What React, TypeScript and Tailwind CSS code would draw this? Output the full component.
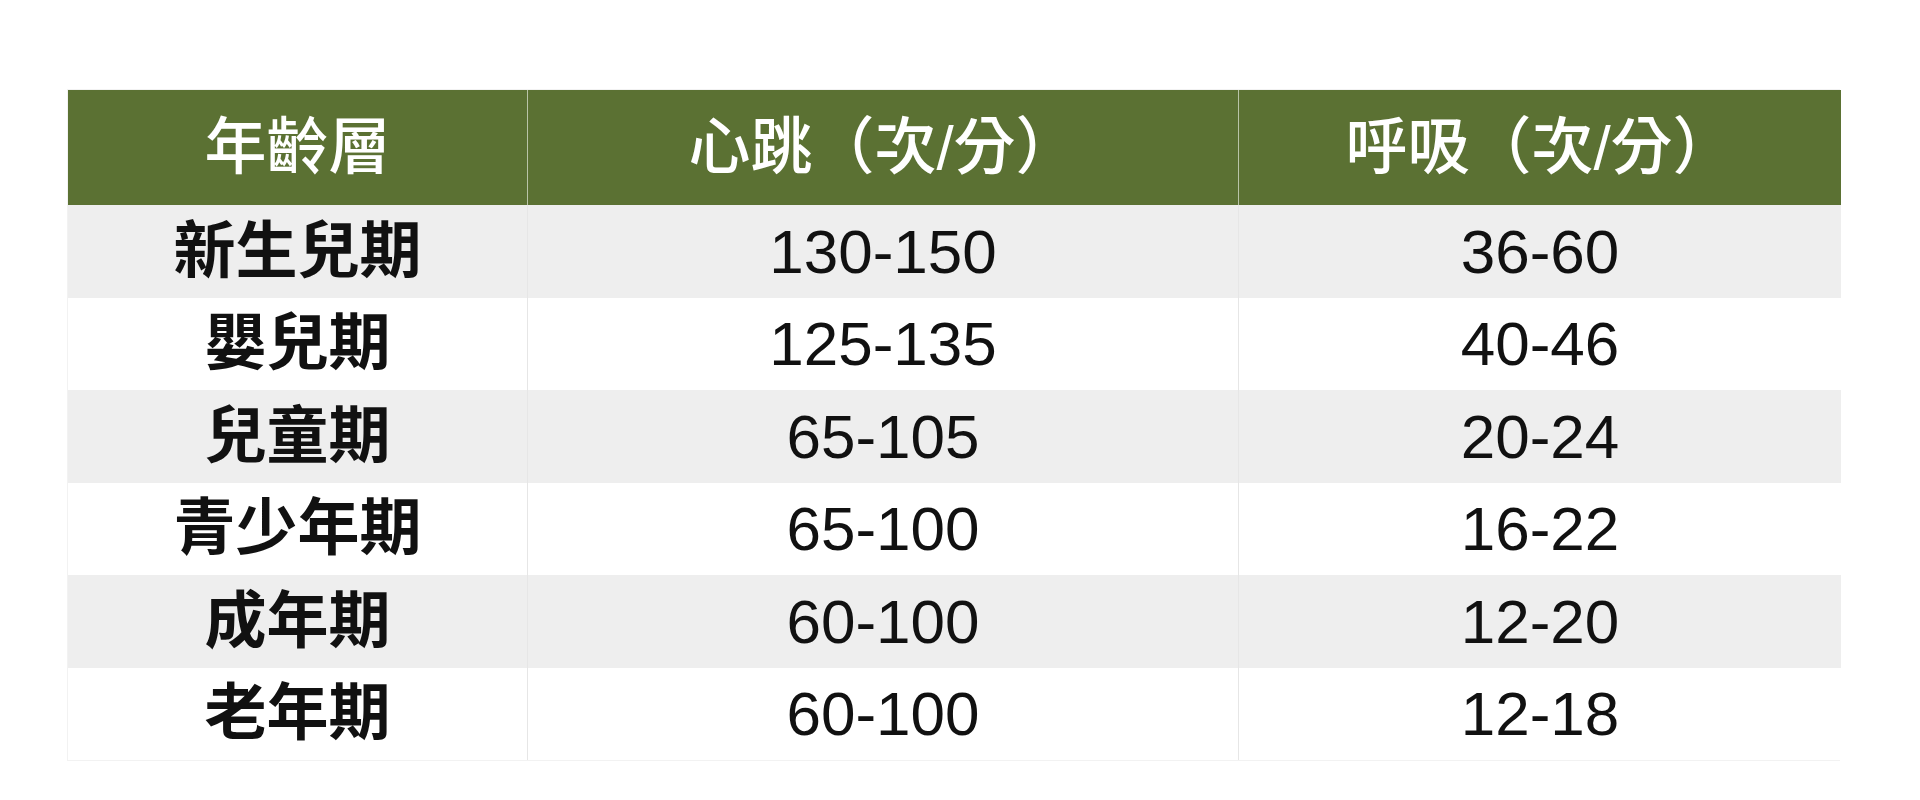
const rows = [
  { age: "新生兒期", heart: "130-150", breath: "36-60" },
  { age: "嬰兒期", heart: "125-135", breath: "40-46" },
  { age: "兒童期", heart: "65-105", breath: "20-24" },
  { age: "青少年期", heart: "65-100", breath: "16-22" },
  { age: "成年期", heart: "60-100", breath: "12-20" },
  { age: "老年期", heart: "60-100", breath: "12-18" },
];

export default function App() {
  return (
    <div className="min-h-[800px] w-[1920px] bg-white pl-[67px] pt-[89px] font-['Liberation_Sans','Noto_Sans_CJK_TC',sans-serif]">
      <div className="grid w-[1773px] grid-cols-[459px_711px_603px] border border-[#f2f2f2]">
        <div className="flex h-[115px] items-center justify-center bg-[#5b7133] text-[62px] font-medium text-white">年齡層</div>
        <div className="flex h-[115px] items-center justify-center border-l border-[#b9c4a8] bg-[#5b7133] text-[62px] font-medium text-white">
          心跳（次/分）
        </div>
        <div className="flex h-[115px] items-center justify-center border-l border-[#b9c4a8] bg-[#5b7133] text-[62px] font-medium text-white">
          呼吸（次/分）
        </div>

        {rows.map((r, i) => {
          const bg = i % 2 === 0 ? "bg-[#eeeeee]" : "bg-white";
          return [
            <div key={r.age + "a"} className={`flex h-[92.5px] items-center justify-center ${bg} text-[62px] font-bold text-[#111]`}>
              {r.age}
            </div>,
            <div key={r.age + "b"} className={`flex h-[92.5px] items-center justify-center border-l border-[#e6e6e6] ${bg} text-[62px] text-[#111]`}>
              {r.heart}
            </div>,
            <div key={r.age + "c"} className={`flex h-[92.5px] items-center justify-center border-l border-[#e6e6e6] ${bg} text-[62px] text-[#111]`}>
              {r.breath}
            </div>,
          ];
        })}
      </div>
    </div>
  );
}
